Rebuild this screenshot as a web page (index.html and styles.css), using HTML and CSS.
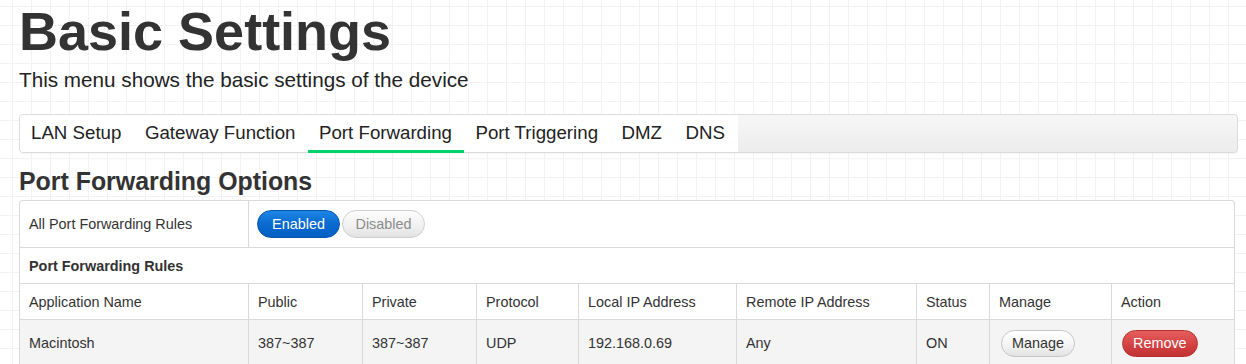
FILE: index.html
```html
<!DOCTYPE html>
<html lang="en">
<head>
    <meta charset="UTF-8">
    <meta name="viewport" content="width=device-width, initial-scale=1.0">
    <title>Basic Settings</title>
    <link rel="stylesheet" href="styles.css">
</head>
<body>
    <div class="page">
        <h1 class="title">Basic Settings</h1>
        <p class="subtitle">This menu shows the basic settings of the device</p>

        <div class="tabs">
            <a class="tab">LAN Setup</a>
            <a class="tab">Gateway Function</a>
            <a class="tab active">Port Forwarding</a>
            <a class="tab">Port Triggering</a>
            <a class="tab">DMZ</a>
            <a class="tab">DNS</a>
        </div>

        <h2 class="section-title">Port Forwarding Options</h2>

        <div class="panel">
            <div class="grid">
                <div class="cell first">All Port Forwarding Rules</div>
                <div class="cell span-rest toggle-cell">
                    <div class="toggle">
                        <button class="btn btn-toggle on">Enabled</button>
                        <button class="btn btn-toggle off">Disabled</button>
                    </div>
                </div>

                <div class="cell first span-all group-title">Port Forwarding Rules</div>

                <div class="cell first">Application Name</div>
                <div class="cell">Public</div>
                <div class="cell">Private</div>
                <div class="cell">Protocol</div>
                <div class="cell">Local IP Address</div>
                <div class="cell">Remote IP Address</div>
                <div class="cell">Status</div>
                <div class="cell">Manage</div>
                <div class="cell">Action</div>

                <div class="cell first row-alt tall">Macintosh</div>
                <div class="cell row-alt tall">387~387</div>
                <div class="cell row-alt tall">387~387</div>
                <div class="cell row-alt tall">UDP</div>
                <div class="cell row-alt tall">192.168.0.69</div>
                <div class="cell row-alt tall">Any</div>
                <div class="cell row-alt tall">ON</div>
                <div class="cell row-alt tall"><button class="btn btn-default">Manage</button></div>
                <div class="cell row-alt tall"><button class="btn btn-danger">Remove</button></div>
            </div>
        </div>
    </div>
</body>
</html>
```

FILE: styles.css
```css
* {
    margin: 0;
    padding: 0;
    box-sizing: border-box;
}

body {
    font-family: 'Liberation Sans', Arial, Helvetica, sans-serif;
    color: #333;
    background-color: #fff;
    background-image:
        linear-gradient(to right, #f2f2f2 1px, transparent 1px),
        linear-gradient(to bottom, #f2f2f2 1px, transparent 1px);
    background-size: 19px 19px;
    background-position: 12px 6px;
    min-height: 100vh;
}

.page {
    padding: 0 8px 0 19px;
}

.title {
    font-size: 54px;
    line-height: 62px;
    font-weight: bold;
    color: #333;
}

.subtitle {
    margin-top: 6px;
    font-size: 20.7px;
    line-height: 24px;
    color: #222;
}

.tabs {
    margin-top: 22px;
    display: flex;
    height: 39px;
    border: 1px solid #dcdcdc;
    border-radius: 4px;
    background: linear-gradient(to bottom, #f7f7f7 0%, #ececec 100%);
    box-shadow: 0 1px 1px rgba(0,0,0,0.04);
}

.tab {
    display: block;
    padding: 7px 12.5px 8px 11px;
    font-size: 18.7px;
    line-height: 22px;
    color: #222;
    background: #fff;
    cursor: pointer;
}

.tab:first-child {
    border-radius: 3px 0 0 3px;
}

.tab.active {
    padding-bottom: 6px;
    margin-bottom: -1px;
    border-bottom: 3px solid #00d36b;
}

.section-title {
    margin-top: 14px;
    margin-bottom: 5px;
    font-size: 24.9px;
    line-height: 28px;
    font-weight: bold;
    color: #333;
}

.panel {
    width: 1216px;
    border: 1px solid #dadada;
    border-bottom: none;
    border-radius: 4px 4px 0 0;
    overflow: hidden;
    background: #fff;
}

.grid {
    display: grid;
    grid-template-columns: 228px 114px 114px 102px 158px 180px 73px 122px 123px;
}

.cell {
    display: flex;
    align-items: center;
    height: 36px;
    padding: 0 9px;
    font-size: 14.4px;
    color: #333;
    border-top: 1px solid #dadada;
    border-left: 1px solid #dadada;
    white-space: nowrap;
}

.cell.first {
    border-left: none;
}

.grid > .cell:nth-child(-n+2) {
    border-top: none;
    height: 46px;
}

.span-rest {
    grid-column: 2 / -1;
}

.span-all {
    grid-column: 1 / -1;
}

.group-title {
    font-weight: bold;
}

.toggle-cell {
    padding-left: 8px;
}

.toggle {
    display: flex;
    gap: 2px;
}

.row-alt {
    background: #f4f4f4;
}

.cell.tall {
    height: 47px;
}

.btn {
    font-family: inherit;
    font-size: 14.4px;
    height: 28px;
    border-radius: 14px;
    border: 1px solid #c9c9c9;
    cursor: pointer;
    padding: 0 11px;
}

.btn-toggle {
    width: 83px;
    padding: 0;
}

.btn-toggle.on {
    color: #fff;
    background: linear-gradient(to bottom, #1c86e6 0%, #0a6ad0 50%, #005fc2 100%);
    border-color: #0657ad;
}

.btn-toggle.off {
    color: #8c8c8c;
    background: linear-gradient(to bottom, #fdfdfd 0%, #f0f0f0 60%, #e2e2e2 100%);
    border-color: #cfcfcf;
}

.btn-default {
    height: 27px;
    margin-left: 2px;
    padding: 0 10px;
    color: #333;
    background: linear-gradient(to bottom, #ffffff 0%, #f3f3f3 60%, #e2e2e2 100%);
    border-color: #c6c6c6;
}

.btn-danger {
    height: 27px;
    margin-left: 1px;
    color: #fff;
    padding: 0 10px;
    background: linear-gradient(to bottom, #e65d5d 0%, #d44343 55%, #c23232 100%);
    border-color: #b63030;
}
```
